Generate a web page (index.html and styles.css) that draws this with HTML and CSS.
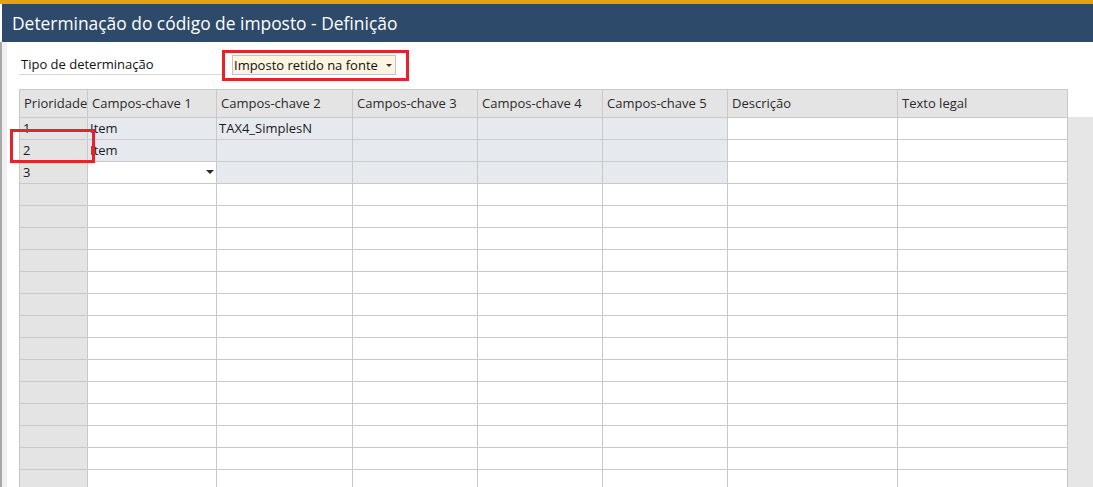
FILE: index.html
```
<!DOCTYPE html>
<html lang="pt">
<head>
<meta charset="utf-8">
<title>Determinação do código de imposto - Definição</title>
<link rel="stylesheet" href="styles.css">
</head>
<body>
<div class="window">
  <div class="titlebar">Determinação do código de imposto - Definição</div>
  <div class="content">
    <div class="content-inner">
      <div class="form-row">
        <div class="field-label">Tipo de determinação</div>
        <div class="mark-box">
          <div class="select"><span>Imposto retido na fonte</span><span class="caret-sm"></span></div>
        </div>
      </div>
      <div class="grid-wrap">
        <div class="grid">
          <div class="hd">Prioridade</div>
          <div class="hd">Campos-chave 1</div>
          <div class="hd">Campos-chave 2</div>
          <div class="hd">Campos-chave 3</div>
          <div class="hd">Campos-chave 4</div>
          <div class="hd">Campos-chave 5</div>
          <div class="hd">Descrição</div>
          <div class="hd">Texto legal</div>

          <div class="cell pri">1</div>
          <div class="cell key">Item</div>
          <div class="cell key">TAX4_SimplesN</div>
          <div class="cell key"></div>
          <div class="cell key"></div>
          <div class="cell key"></div>
          <div class="cell"></div>
          <div class="cell"></div>

          <div class="cell pri">2</div>
          <div class="cell key">Item</div>
          <div class="cell key"></div>
          <div class="cell key"></div>
          <div class="cell key"></div>
          <div class="cell key"></div>
          <div class="cell"></div>
          <div class="cell"></div>

          <div class="cell pri">3</div>
          <div class="cell combo"><span></span><span class="caret"></span></div>
          <div class="cell key"></div>
          <div class="cell key"></div>
          <div class="cell key"></div>
          <div class="cell key"></div>
          <div class="cell"></div>
          <div class="cell"></div>

          <div class="cell pri"></div><div class="cell"></div><div class="cell"></div><div class="cell"></div><div class="cell"></div><div class="cell"></div><div class="cell"></div><div class="cell"></div>
          <div class="cell pri"></div><div class="cell"></div><div class="cell"></div><div class="cell"></div><div class="cell"></div><div class="cell"></div><div class="cell"></div><div class="cell"></div>
          <div class="cell pri"></div><div class="cell"></div><div class="cell"></div><div class="cell"></div><div class="cell"></div><div class="cell"></div><div class="cell"></div><div class="cell"></div>
          <div class="cell pri"></div><div class="cell"></div><div class="cell"></div><div class="cell"></div><div class="cell"></div><div class="cell"></div><div class="cell"></div><div class="cell"></div>
          <div class="cell pri"></div><div class="cell"></div><div class="cell"></div><div class="cell"></div><div class="cell"></div><div class="cell"></div><div class="cell"></div><div class="cell"></div>
          <div class="cell pri"></div><div class="cell"></div><div class="cell"></div><div class="cell"></div><div class="cell"></div><div class="cell"></div><div class="cell"></div><div class="cell"></div>
          <div class="cell pri"></div><div class="cell"></div><div class="cell"></div><div class="cell"></div><div class="cell"></div><div class="cell"></div><div class="cell"></div><div class="cell"></div>
          <div class="cell pri"></div><div class="cell"></div><div class="cell"></div><div class="cell"></div><div class="cell"></div><div class="cell"></div><div class="cell"></div><div class="cell"></div>
          <div class="cell pri"></div><div class="cell"></div><div class="cell"></div><div class="cell"></div><div class="cell"></div><div class="cell"></div><div class="cell"></div><div class="cell"></div>
          <div class="cell pri"></div><div class="cell"></div><div class="cell"></div><div class="cell"></div><div class="cell"></div><div class="cell"></div><div class="cell"></div><div class="cell"></div>
          <div class="cell pri"></div><div class="cell"></div><div class="cell"></div><div class="cell"></div><div class="cell"></div><div class="cell"></div><div class="cell"></div><div class="cell"></div>
          <div class="cell pri"></div><div class="cell"></div><div class="cell"></div><div class="cell"></div><div class="cell"></div><div class="cell"></div><div class="cell"></div><div class="cell"></div>
          <div class="cell pri"></div><div class="cell"></div><div class="cell"></div><div class="cell"></div><div class="cell"></div><div class="cell"></div><div class="cell"></div><div class="cell"></div>
          <div class="cell pri"></div><div class="cell"></div><div class="cell"></div><div class="cell"></div><div class="cell"></div><div class="cell"></div><div class="cell"></div><div class="cell"></div>
          <div class="cell pri"></div><div class="cell"></div><div class="cell"></div><div class="cell"></div><div class="cell"></div><div class="cell"></div><div class="cell"></div><div class="cell"></div>
        </div>
        <div class="scrollbar"></div>
      </div>
    </div>
  </div>
  <div class="mark-rows"></div>
</div>
</body>
</html>
```

FILE: styles.css
```
* { box-sizing: border-box; }

html, body {
  margin: 0;
  padding: 0;
  background: #ffffff;
  overflow: hidden;
}

body {
  width: 1093px;
  height: 487px;
  font-family: "Open Sans", "Noto Sans", sans-serif;
  font-size: 13px;
  color: #1a1a1a;
}

.window {
  position: relative;
  height: 487px;
  border-top: 4px solid #e6a20e;
  overflow: hidden;
}

.titlebar {
  margin-left: 2px;
  height: 38px;
  background: #2d4a6b;
  color: #ffffff;
  font-size: 17.4px;
  line-height: 38px;
  padding-left: 10px;
  white-space: nowrap;
}

.content {
  border-left: 2px solid #a9a9a9;
  height: 445px;
}

.content-inner {
  border-left: 5px solid #f0f0f0;
  padding-left: 12px;
  height: 100%;
}

.form-row {
  display: flex;
  align-items: flex-start;
  padding-top: 8px;
}

.field-label {
  width: 203px;
  height: 25px;
  padding-top: 6px;
  padding-left: 2px;
  line-height: 17px;
  border-bottom: 1px solid #d9d9d9;
  color: #111;
}

.mark-box {
  width: 187px;
  height: 31px;
  border: 3px solid #e4232b;
  padding: 2px 10px 0 7px;
}

.select {
  height: 20px;
  background: #fdf5e0;
  border: 1px solid #bcc6d2;
  display: flex;
  align-items: center;
  justify-content: space-between;
  padding: 0 3px 0 1px;
  line-height: 18px;
  color: #111;
}

.caret-sm {
  width: 0;
  height: 0;
  border-left: 3px solid transparent;
  border-right: 3px solid transparent;
  border-top: 3px solid #333;
  margin-top: 1px;
}

.grid-wrap {
  display: flex;
  align-items: flex-start;
  margin-top: 8px;
}

.grid {
  display: grid;
  grid-template-columns: 68px 129px 136px 125px 125px 125px 170px 170px;
  grid-template-rows: 28px;
  grid-auto-rows: 22px;
  border-top: 1px solid #c9c9c9;
  border-left: 1px solid #c9c9c9;
}

.hd {
  height: 28px;
  background: #e4e4e4;
  border-right: 1px solid #c9c9c9;
  border-bottom: 1px solid #c9c9c9;
  padding-left: 4px;
  line-height: 26px;
  color: #2b2b2b;
  white-space: nowrap;
  overflow: hidden;
}

.cell {
  height: 22px;
  background: #ffffff;
  border-right: 1px solid #c9c9c9;
  border-bottom: 1px solid #c9c9c9;
  padding-left: 2px;
  line-height: 21px;
  color: #1a1a1a;
  white-space: nowrap;
  overflow: hidden;
}

.cell.pri {
  background: #e4e4e4;
  padding-left: 3px;
}

.cell.key {
  background: #e6eaef;
}

.cell.combo {
  display: flex;
  align-items: center;
  justify-content: space-between;
  padding-right: 2px;
}

.caret {
  width: 0;
  height: 0;
  border-left: 4px solid transparent;
  border-right: 4px solid transparent;
  border-top: 4px solid #2b2b2b;
  margin-top: -2px;
}

.scrollbar {
  margin-top: 28px;
  width: 25px;
  height: 380px;
  background: #e6e6e6;
}

.mark-rows {
  position: absolute;
  left: 10px;
  top: 125px;
  width: 85px;
  height: 34px;
  border: 3px solid #e4232b;
}
```
